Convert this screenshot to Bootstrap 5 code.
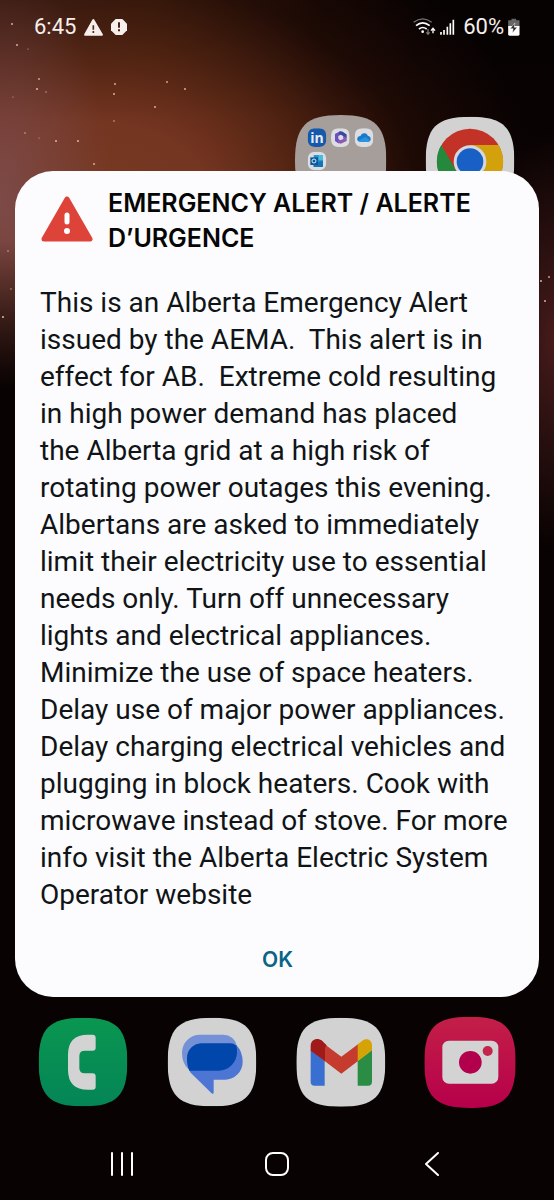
<!DOCTYPE html>
<html lang="en">
<head>
<meta charset="utf-8">
<meta name="viewport" content="width=device-width, initial-scale=1">
<title>Emergency Alert</title>
<link href="https://cdn.jsdelivr.net/npm/bootstrap@5.3.0/dist/css/bootstrap.min.css" rel="stylesheet">
<style>
body{font-family:Roboto,"Liberation Sans",sans-serif;background:#080202;color:#f6efec}
.wallpaper{
  background:
    radial-gradient(80px 210px at 100% 340px,#461b1b,#461b1b00),
    linear-gradient(180deg,#08020200 240px,#080202 390px),
    linear-gradient(180deg,#00000030,#0000 120px),
    radial-gradient(110px 240px at 0 200px,#7d4a48,#7d4a4800),
    radial-gradient(440px 310px at 100px 200px,#783a22 0,#743521 25%,#5c2815dd 45%,#2c0f0799 72%,#2c0f0700),
    linear-gradient(90deg,#62352a 0,#54290f 28%,#32170a 42%,#110503 58%,#080202 75%);
}
.stars{z-index:0}
.statusbar{font-size:22px;line-height:26px;padding:14px 34px 0 34px}
.launcher{padding:0 20px 0 18px}
.home-row{margin-top:75px}
.tile{width:90px;height:90px}
.tile svg{width:90px;height:90px;overflow:visible;display:block}
.alert-panel{background:#fcfcfe;color:#111416;border-radius:38px;margin:-34px 15px 0 15px;padding:15px 24px 18px 25px}
.alert-title{font-family:Inter,sans-serif;font-size:25px;line-height:35px;font-weight:600;color:#060606;margin-left:14px}
.alert-text{font-size:28px;line-height:37px;margin-top:28px;margin-bottom:28px}
.ok-btn{font-family:Inter,sans-serif;font-size:21px;line-height:26px;font-weight:600;color:#0a6486;padding:6px 24px}
.dock{margin-top:20px}
.navkeys{padding:0 44px;margin-top:45px;padding-bottom:24px}
</style>
</head>
<body>
<svg width="0" height="0" class="position-absolute" aria-hidden="true">
  <symbol id="squircle" viewBox="0 0 266 266"><path d="M0 133C0 32 32 0 133 0S266 32 266 133 234 266 133 266 0 234 0 133Z"/></symbol>
</svg>
<div class="wallpaper position-relative min-vh-100 d-flex flex-column">
  <svg class="stars position-absolute top-0 start-0" width="100%" height="400" aria-hidden="true">
    <g fill="#e0ab94">
      <circle cx="12" cy="24" r="1"/><circle cx="17" cy="45" r="1"/><circle cx="28" cy="49" r=".6"/><circle cx="39" cy="79" r=".9"/><circle cx="37" cy="89" r="1.1"/><circle cx="46" cy="92" r=".7"/><circle cx="13" cy="97" r=".6"/>
      <circle cx="115" cy="84" r="1"/><circle cx="114" cy="94" r="1"/><circle cx="167" cy="82" r=".9"/><circle cx="185" cy="89" r="1"/><circle cx="155" cy="107" r="1"/><circle cx="114" cy="121" r=".8"/><circle cx="25" cy="133" r=".8"/><circle cx="39" cy="138" r=".6"/><circle cx="56" cy="141" r="1.1"/><circle cx="78" cy="141" r="1.1"/><circle cx="94" cy="164" r="1"/>
      <circle cx="8" cy="251" r=".8"/><circle cx="11" cy="289" r=".7"/><circle cx="3" cy="317" r="1.1"/><circle cx="541" cy="281" r="1"/><circle cx="549" cy="277" r=".9"/><circle cx="545" cy="301" r="1"/>
    </g>
  </svg>

  <header class="statusbar position-relative d-flex justify-content-between align-items-center">
    <div class="d-flex align-items-center gap-2">
      <span>6:45</span>
      <svg width="19" height="17" viewBox="251 54 57 51" aria-hidden="true"><path d="M279 58L304 101H255Z" fill="#f6efec" stroke="#f6efec" stroke-width="7" stroke-linejoin="round"/><path d="M279 73v13M279 90v6" stroke="#542a1c" stroke-width="5"/></svg>
      <svg width="16" height="16" viewBox="328 57 48 48" aria-hidden="true"><path d="M342 57h20l14 14v20l-14 14h-20l-14-14V71Z" fill="#f6efec"/><path d="M352 67v16M352 88v6" stroke="#4a2416" stroke-width="6"/></svg>
    </div>
    <div class="d-flex align-items-center">
      <svg class="me-1" width="23" height="18" viewBox="408 53 69 54" fill="none" aria-hidden="true">
        <path d="M410 66Q437 45 464 66" stroke="#777" stroke-width="4"/><path d="M417 76Q437 59 458 76" stroke="#fff" stroke-width="5"/><path d="M426 86Q437 77 449 86" stroke="#fff" stroke-width="5"/><circle cx="437" cy="94" r="4" fill="#fff"/>
        <path d="M453 86v14M448 96l5 6 5-6" stroke="#777" stroke-width="4"/><path d="M468 99V85M462 91l6-7 6 7" stroke="#fff" stroke-width="4"/>
      </svg>
      <svg class="me-2" width="15" height="16" viewBox="490 56 45 48" aria-hidden="true"><path d="M493 95v8M502 89v14M512 79v24M521 69v34M530 58v45" stroke="#fff" stroke-width="5"/></svg>
      <span class="me-1">60%</span>
      <svg width="12" height="18" viewBox="695 52 35 54" aria-hidden="true"><path d="M705 54h14v5h10v22h-34V59h10Z" fill="#666"/><path d="M695 76h34v25q0 4-4 4h-26q-4 0-4-4Z" fill="#fff"/><path d="M715 67L701 84h9l-2 13 14-17h-9Z" fill="#222" stroke="#fff" stroke-width="1.5"/></svg>
    </div>
  </header>

  <section class="launcher home-row position-relative" aria-label="Apps">
    <div class="row g-0">
      <div class="col-3 offset-6 d-flex justify-content-center">
        <button class="tile btn p-0 border-0" type="button" aria-label="Work folder">
          <svg viewBox="49 44 270 270">
            <use href="#squircle" x="46" y="44" width="274" height="274" fill="#a69e9b"/>
            <use href="#squircle" x="84" y="84" width="56" height="56" fill="#1459ac"/>
            <text x="112" y="129" text-anchor="middle" font-family="Open Sans,sans-serif" font-weight="700" font-size="42" fill="#e8eaf0">in</text>
            <g fill="#dcdde1"><use href="#squircle" x="154" y="84" width="56" height="56"/><use href="#squircle" x="225" y="84" width="56" height="56"/><use href="#squircle" x="84" y="154" width="56" height="56"/></g>
            <g fill="none" stroke-width="10"><path d="M180 125L171 119V104L182 98" stroke="#6a4fc0"/><path d="M179 97L187 99 196 105V113" stroke="#39489c"/><path d="M196 109V119L183 125 175 122" stroke="#8c58b5"/></g>
            <path d="M240 124q-9-2-7-11 2-6 9-6 4-10 14-8 6 1 9 8 8 1 8 9t-8 8Z" fill="#1b79cc"/><path d="M236 121l22-11 13 11q-2 3-6 3h-24Z" fill="#2495df"/>
            <path d="M102 164h28v36h-28Z" fill="#2597d5"/><path d="M117 164h13v15h-13Z" fill="#46bddb"/><path d="M102 186l28-4v18h-28Z" fill="#1474b8"/><path d="M92 171h23v23H92Z" fill="#0c5798"/><circle cx="103" cy="182" r="6" fill="none" stroke="#dfe7ef" stroke-width="3"/>
          </svg>
        </button>
      </div>
      <div class="col-3 d-flex justify-content-center">
        <button class="tile btn p-0 border-0" type="button" aria-label="Chrome">
          <svg viewBox="435 44 270 270">
            <use href="#squircle" x="437" y="49" width="266" height="266" fill="#d2d2d2"/>
            <circle cx="570" cy="184" r="99" fill="#c23227"/>
            <path d="M570 134h86A99 99 0 0 1 570 283l43-74Z" fill="#d2a10c"/>
            <path d="M484 134A99 99 0 0 0 570 283l43-74h-86Z" fill="#25893d"/>
            <circle cx="570" cy="184" r="49" fill="#d6d8dc"/><circle cx="570" cy="184" r="40" fill="#185fc6"/>
          </svg>
        </button>
      </div>
    </div>
  </section>

  <main class="alert-panel position-relative" role="alertdialog" aria-labelledby="alertTitle" aria-describedby="alertText">
    <div class="d-flex align-items-start">
      <svg class="flex-shrink-0 mt-2" width="54" height="50" viewBox="0 0 54 50" aria-hidden="true"><path d="M27 5L50 45H4Z" fill="#dd4338" stroke="#dd4338" stroke-width="5" stroke-linejoin="round"/><path d="M27 21v7" stroke="#fff" stroke-width="5" stroke-linecap="round"/><circle cx="27" cy="37" r="3" fill="#fff"/></svg>
      <h1 class="alert-title mb-0 text-nowrap" id="alertTitle">EMERGENCY ALERT / ALERTE<br>D’URGENCE</h1>
    </div>
    <p class="alert-text text-nowrap" id="alertText">This is an Alberta Emergency Alert<br>issued by the AEMA.&nbsp; This alert is in<br>effect for AB.&nbsp; Extreme cold resulting<br>in high power demand has placed<br>the Alberta grid at a high risk of<br>rotating power outages this evening.<br>Albertans are asked to immediately<br>limit their electricity use to essential<br>needs only. Turn off unnecessary<br>lights and electrical appliances.<br>Minimize the use of space heaters.<br>Delay use of major power appliances.<br>Delay charging electrical vehicles and<br>plugging in block heaters. Cook with<br>microwave instead of stove. For more<br>info visit the Alberta Electric System<br>Operator website</p>
    <div class="text-center"><button type="button" class="btn border-0 ok-btn">OK</button></div>
  </main>

  <section class="launcher dock position-relative" aria-label="Dock">
    <div class="row g-0">
      <div class="col-3 d-flex justify-content-center">
        <button class="tile btn p-0 border-0" type="button" aria-label="Phone">
          <svg viewBox="56 34 270 270">
            <defs><linearGradient id="green" x2="0" y2="1"><stop stop-color="#0a9650"/><stop offset="1" stop-color="#048557"/></linearGradient><linearGradient id="pink" x2="0" y2="1"><stop stop-color="#c31f48"/><stop offset="1" stop-color="#b6004a"/></linearGradient></defs>
            <use href="#squircle" x="58" y="36" width="266" height="266" fill="url(#green)"/>
            <path d="M206 87h14q9 0 9 9v30q0 9-9 9h-24q-16 0-16 16v36q0 16 16 16h24q9 0 9 9v31q0 9-9 9h-14q-60 0-60-60v-45q0-60 60-60Z" fill="#d3d3d3"/>
          </svg>
        </button>
      </div>
      <div class="col-3 d-flex justify-content-center">
        <button class="tile btn p-0 border-0" type="button" aria-label="Messages">
          <svg viewBox="442 34 270 270">
            <use href="#squircle" x="444" y="36" width="266" height="266" fill="#d2d2d3"/>
            <path d="M541 87h70a40 40 0 0 1 40 33L505 189Q487 171 487 141A54 54 0 0 1 541 87Z" fill="#7490d6"/>
            <path d="M502 156L650 118Q669 138 669 168A53 53 0 0 1 616 222H582v38q0 8-7 2L513 201Q502 186 502 156Z" fill="#4d76d4"/>
            <path d="M544 113h88q10 0 18 7 2 7 2 20a55 55 0 0 1-55 55h-88q-7-15-7-38a44 44 0 0 1 42-44Z" fill="#0146aa"/>
          </svg>
        </button>
      </div>
      <div class="col-3 d-flex justify-content-center">
        <button class="tile btn p-0 border-0" type="button" aria-label="Gmail">
          <svg viewBox="49 34 270 270">
            <use href="#squircle" x="50" y="36" width="267" height="267" fill="#d2d2d2"/>
            <path d="M93 133l42 32v75h-30q-12 0-12-12Z" fill="#386fd0"/><path d="M234 166l43-33v95q0 12-12 12h-31Z" fill="#2a8d43"/>
            <path d="M135 116l50 37 50-37v50l-50 38-50-38Z" fill="#c53b2d"/>
            <path d="M93 135v-15c0-18 20-26 34-15l9 11v51Z" fill="#a01a1a"/><path d="M234 116l14-11c15-10 29-2 29 15v14l-43 33Z" fill="#d6a306"/>
            <path d="M123 102l18 17-5 7Z" fill="#a01a1a"/>
          </svg>
        </button>
      </div>
      <div class="col-3 d-flex justify-content-center">
        <button class="tile btn p-0 border-0" type="button" aria-label="Camera">
          <svg viewBox="434 34 270 270">
            <use href="#squircle" x="432" y="33" width="274" height="274" fill="url(#pink)"/>
            <rect x="486" y="105" width="168" height="129" rx="20" fill="#d3d3d3"/><circle cx="570" cy="170" r="34" fill="#b3004c"/><circle cx="622" cy="136" r="15" fill="#c4254d"/>
          </svg>
        </button>
      </div>
    </div>
  </section>

  <nav class="navkeys position-relative" aria-label="System">
    <div class="row g-0 text-center">
      <div class="col-4"><button class="btn p-0 border-0 d-block mx-auto" type="button" aria-label="Recents"><svg class="d-block" width="24" height="24" viewBox="0 0 24 24" stroke="#fff" stroke-width="2" stroke-linecap="round"><path d="M2 1v22M12 1v22M22 1v22"/></svg></button></div>
      <div class="col-4"><button class="btn p-0 border-0 d-block mx-auto" type="button" aria-label="Home"><svg class="d-block" width="24" height="24" viewBox="0 0 24 24" fill="none" stroke="#fff" stroke-width="2"><rect x="1" y="1" width="22" height="22" rx="7"/></svg></button></div>
      <div class="col-4"><button class="btn p-0 border-0 d-block mx-auto" type="button" aria-label="Back"><svg class="d-block" width="24" height="24" viewBox="0 0 24 24" fill="none" stroke="#fff" stroke-width="2" stroke-linecap="round" stroke-linejoin="round"><path d="M18 1L6 12l12 11"/></svg></button></div>
    </div>
  </nav>
</div>
<script src="https://cdn.jsdelivr.net/npm/bootstrap@5.3.0/dist/js/bootstrap.bundle.min.js"></script>
</body>
</html>
